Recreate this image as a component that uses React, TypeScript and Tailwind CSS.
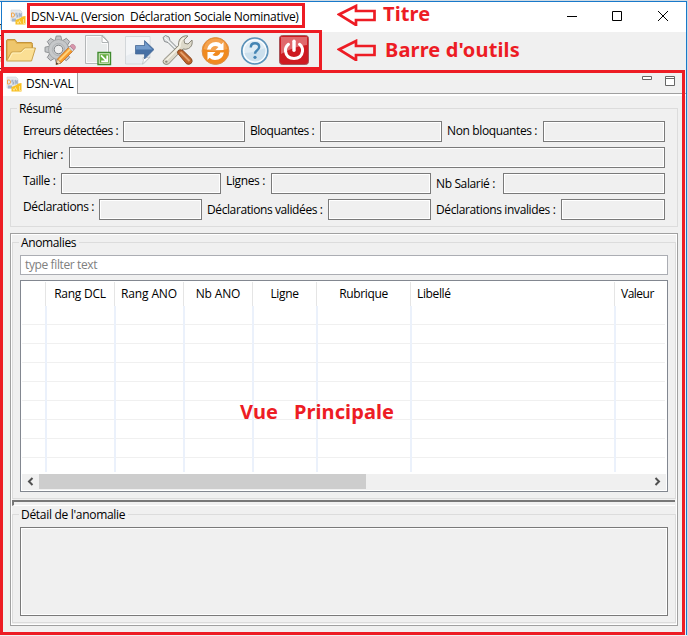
import type { ReactNode } from "react";

function AppLogo() {
  return (
    <svg width="16" height="16" viewBox="0 0 16 16" className="shrink-0">
      <path d="M1 1h9l2 2v9H1z" fill="#e4e7ec" stroke="#ced3da" strokeWidth=".6" />
      <path d="M1.500 4h1.500q1.500 0 1.500 2T3 8H1.500z" fill="none" stroke="#f2a64a" strokeWidth="1" />
      <path d="M7.500 4.200H6V6h1.500v2H6M9.200 8.500V4l2 4V4" fill="none" stroke="#9fb0c6" strokeWidth="1.100" />
      <path d="M2 9.500h4v3H2z" fill="#a3b6cc" />
      <path d="M5.500 15.500V11l4-1.500 3-2 3-.5v8.500z" fill="#f8c023" />
      <path d="M7 12.500l1 2 1.500-3 1.500 3M13.500 10v4.500H15" fill="none" stroke="#fde9a4" strokeWidth=".8" />
    </svg>
  );
}

function Icon({ children }: { children: ReactNode }) {
  return (
    <svg width="32" height="32" viewBox="0 0 32 32" className="shrink-0">
      {children}
    </svg>
  );
}

function ToolIcons() {
  return (
    <>
      <Icon>
        <path d="M1.500 26V7q0-1.500 1.500-1.500h7l2 3h14q1.500 0 1.500 2v5" fill="#e2b24f" stroke="#c2943e" />
        <path d="M3 25V8q0-1 1-1h5.500l2 3h13.500q1 0 1 1.500v4L6 19z" fill="#eec66c" />
        <path d="M1.500 27l5-9h9l4-4h11l-4 13z" fill="#fbdf94" stroke="#c9a04b" strokeLinejoin="round" />
        <path d="M4 25.500l3.500-6.500H16l4-4h9" fill="none" stroke="#fff1bd" />
      </Icon>
      <Icon>
        {[0, 45, 90, 135, 180, 225, 270, 315].map((a) => (
          <path key={a} d="M11 7l1.200-5h4.600L18 7z" transform={`rotate(${a} 14.5 15.5)`} fill="#c3c5c7" stroke="#898c8f" strokeWidth=".9" strokeLinejoin="round" />
        ))}
        <circle cx="14.500" cy="15.500" r="10" fill="#c6c8ca" stroke="#909396" strokeWidth=".6" />
        <circle cx="14.500" cy="15.500" r="8.800" fill="#c6c8ca" />
        <circle cx="14.500" cy="15.500" r="6.200" fill="none" stroke="#b1b4b6" />
        <circle cx="14.500" cy="15.500" r="4.300" fill="#efefef" stroke="#7f8285" />
        <path d="M12 30.500l1.500-5.500L25.500 12.500l4 4L17 29z" fill="#f79a2c" stroke="#b9691e" strokeWidth=".7" />
        <path d="M14.500 25.500l12-12 1.400 1.400-12 12z" fill="#ffd279" />
        <path d="M12 30.500l1.500-5.500 3.500 4z" fill="#f4dcb5" stroke="#9b6f46" strokeWidth=".5" />
        <path d="M24.500 13.500l1.500-1.500 4 4-1.500 1.500z" fill="#d5d5d8" stroke="#96969a" strokeWidth=".4" />
        <path d="M26 12l1.500-1.500q1.500-.7 3 .7t.8 3L30 16z" fill="#d995ab" stroke="#a76a80" strokeWidth=".5" />
        <path d="M12 30.500l.6-2.200 1.500 1.600z" fill="#222" />
      </Icon>
      <Icon>
        <path d="M2.500 1.500H20l5.500 6.500v21.500h-23z" fill="#eef0f0" stroke="#b4b7b8" strokeLinejoin="round" />
        <path d="M3.500 2.500h15v7h6v19h-21z" fill="#e9ebeb" stroke="#fbfbfb" />
        <path d="M19 2v6.500h6.500z" fill="#fff" stroke="#b0b4b5" strokeLinejoin="round" />
        <path d="M15 18.500h12.500v12H15z" fill="#dff0cf" stroke="#3f8a2e" strokeWidth="1.400" />
        <path d="M16.700 20.200h9.100v8.600h-9.100z" fill="#62ac3e" />
        <path d="M18 21.300l5 5M24.200 21.500v5.800h-6" fill="none" stroke="#fff" strokeWidth="1.700" />
      </Icon>
      <Icon>
        <path d="M3.500 2.500h24.500v21L21.500 30H3.500z" fill="#e9edf1" stroke="#d3d7da" />
        <path d="M4 3h23.500v8L4 22z" fill="#f3f5f7" />
        <path d="M20.500 30q1.500-4 .5-6.500 3 .7 7-.5z" fill="#fff" stroke="#b9bdbf" strokeWidth=".8" />
        <path d="M13.500 11.500h9v-5l9.500 9-9.500 9.500v-5h-9z" fill="#456fa4" stroke="#426692" strokeWidth=".7" />
        <path d="M14 12h9V8l7.500 7.500H14z" fill="#739bcb" />
      </Icon>
      <Icon>
        <path d="M2 3.500L4.500 1.500 8 3l1 3.500L20 17.500l-2 2L7 8.500 3.500 7.500z" fill="#dfe2e3" stroke="#7c8082" strokeWidth=".9" />
        <path d="M4 4l14.500 14" stroke="#fff" strokeWidth=".8" />
        <path d="M2.500 26L17.500 11.500Q17 5 22 2.500q2.500-1.200 5-.5L23 6l.7 3.300 3.300.7 4-4q1.200 6-3.500 8.500-2.500 1.300-5.500.5L7.500 30q-2.700 1-4.700-.5-1.300-1.700-.3-3.500z" fill="#ddd9ca" stroke="#817e71" strokeWidth=".9" />
        <path d="M4.500 27l14.500-14.500Q18.500 7 23 4" fill="none" stroke="#f5f2e6" strokeWidth="1.500" />
        <circle cx="5.300" cy="27.600" r="1.200" fill="#8c897c" />
        <path d="M16.500 19q-.3-2.500 2.500-3.300l3 .8 8.500 8.300q1.500 2.600-.3 4.500-2 1.800-4.700.5z" fill="#bd642c" stroke="#814018" strokeWidth=".9" />
        <path d="M19.500 18l9 9" stroke="#e6a16c" strokeWidth="1.800" />
      </Icon>
      <Icon>
        <circle cx="15.500" cy="17" r="13.400" fill="#f08a1f" stroke="#dc8f48" />
        <path d="M3.500 15q2-10.500 12-10.500t12 10.500q-12 4-24 0z" fill="#f5ad62" opacity=".7" />
        <path d="M7 15.500q1.500-7.500 9-7.500 3.300 0 5.500 2.300L23.500 8v8h-8l3-3q-3.700-2.300-6.500.3-1 1-1.300 2.200z" fill="#fff" />
        <path d="M24 18.500q-1.500 7.500-9 7.500-3.300 0-5.500-2.300L7.500 26v-8h8l-3 3q3.700 2.300 6.500-.3 1-1 1.300-2.200z" fill="#fff" />
      </Icon>
      <Icon>
        <circle cx="15.800" cy="17" r="13" fill="#cfe2ef" stroke="#5c92b9" strokeWidth="1.700" />
        <circle cx="15.800" cy="17" r="11.200" fill="#e0ecf4" stroke="#fafdff" strokeWidth="1.300" />
        <path d="M5.500 19q10-.5 20.800-5 1 8-4 11.500-5.500 3.500-11.500.5-4-2.300-5.300-7z" fill="#cce0ed" />
        <path d="M11.800 13.500q0-4.200 4.200-4.200t4.200 3.800q0 2-2.500 3.700-1.700 1.200-1.700 3" fill="none" stroke="#4585b3" strokeWidth="2.400" />
        <circle cx="16" cy="23.300" r="1.600" fill="#4585b3" />
      </Icon>
      <Icon>
        <rect x="1.500" y="1.500" width="29" height="29" rx="3" fill="#ce1a21" stroke="#a9555a" />
        <path d="M3 3h26v8Q17 12 3 20z" fill="#e0686c" />
        <path d="M10.500 10.300Q7 13 7.500 17.300q1 7.200 8.500 7.200t8.500-7.200q.5-4.300-3-7" fill="none" stroke="#fff" strokeWidth="3" strokeLinecap="round" />
        <path d="M16 7.300v9" stroke="#fff" strokeWidth="3.400" strokeLinecap="round" />
      </Icon>
    </>
  );
}

function Field({ w }: { w: string }) {
  return <div className={`h-[21px] shrink-0 border border-[#7a7a7a] bg-[#f0f0f0] shadow-[inset_0_0_0_1px_#fff] ${w}`} />;
}

function Label({ w, pad, children }: { w: string; pad: string; children: ReactNode }) {
  return <div className={`h-[21px] shrink-0 leading-4 whitespace-nowrap ${w} ${pad}`}>{children}</div>;
}

function Legend({ children, className }: { children: ReactNode; className: string }) {
  return <div className={`absolute bg-[#f0f0f0] leading-4 whitespace-nowrap ${className}`}>{children}</div>;
}

const columns = [
  { name: "", w: "w-[23px]", align: "" },
  { name: "Rang DCL", w: "w-[69px]", align: "text-center tracking-[-0.25px]" },
  { name: "Rang ANO", w: "w-[69px]", align: "text-center tracking-[-0.15px]" },
  { name: "Nb ANO", w: "w-[69px]", align: "text-center tracking-[-0.15px]" },
  { name: "Ligne", w: "w-[64px]", align: "text-center" },
  { name: "Rubrique", w: "w-[94px]", align: "text-center" },
  { name: "Libellé", w: "w-[204px]", align: "pl-[6px]" },
  { name: "Valeur", w: "w-[51px]", align: "pl-[6px] tracking-[-0.5px]" },
];

function Table() {
  return (
    <div className="mt-[5px] flex h-[212px] flex-col border border-[#828790] bg-white p-px">
      <div className="flex h-6">
        {columns.map((c, i) => (
          <div key={i} className={`shrink-0 pt-1 leading-4 whitespace-nowrap ${c.w} ${c.align} ${i ? "border-l border-[#e5e5e5]" : ""}`}>
            {c.name}
          </div>
        ))}
      </div>
      <div className="h-[168px]">
        <div className="flex h-[166px]">
          {columns.map((c, i) => (
            <div key={i} className={`shrink-0 ${c.w} ${i ? "border-l-2 border-[#ebf1fb]" : ""}`}>
              {[0, 1, 2, 3, 4, 5, 6, 7].map((r) => (
                <div key={r} className="h-[19px] border-b border-[#f0f0f0]" />
              ))}
            </div>
          ))}
        </div>
      </div>
      <div className="flex h-4 items-center bg-[#f0f0f0]">
        <svg width="17" height="16" className="shrink-0"><path d="M10.500 4L7 7.500l3.500 3.500" fill="none" stroke="#505050" strokeWidth="2" /></svg>
        <div className="mb-px h-[15px] w-[327px] bg-[#cdcdcd]" />
        <div className="flex-1" />
        <svg width="17" height="16" className="shrink-0"><path d="M6.500 4L10 7.500 6.500 11" fill="none" stroke="#505050" strokeWidth="2" /></svg>
      </div>
    </div>
  );
}

function RedArrow() {
  return (
    <svg width="40" height="22" className="shrink-0">
      <path d="M2 11.500L19 3v5h18.500v9H19v5z" transform="translate(0 -1)" fill="none" stroke="#ed1c24" strokeWidth="2.700" />
    </svg>
  );
}

export default function App() {
  return (
    <div className="relative flex h-[636px] w-[688px] flex-col overflow-hidden border-t border-r border-[#d0dbe4] bg-[#f0f0f0] font-['Open_Sans','Noto_Sans',sans-serif] text-[12px] tracking-[-0.37px] text-black">
      <header className="flex h-[31px] shrink-0 items-center border-t border-r border-[#1979ca] bg-white pl-[10px]">
        <AppLogo />
        <div className="ml-[5px] w-[520px] leading-4 whitespace-pre tracking-[-0.29px]">DSN-VAL (Version  Déclaration Sociale Nominative)</div>
        <svg width="130" height="30" className="shrink-0" fill="none" stroke="#000">
          <path d="M16 14.500h10M61.500 9.500h9v9h-9z" />
          <path d="M107 9l10 10M117 9l-10 10" />
        </svg>
      </header>

      <div className="flex h-[38px] shrink-0 items-start gap-[7px] border-r border-[#1979ca] pt-[2px] pl-[5px]">
        <ToolIcons />
      </div>

      <main className="flex h-[565px] shrink-0 flex-col border-r border-[#1979ca] pt-[3px]">
        <div className="flex h-[21px] shrink-0 border-b border-[#a0a0a0]">
          <div className="-mb-px flex w-[78px] items-center border-r border-[#a0a0a0] bg-white pl-[6px]">
            <AppLogo />
            <span className="ml-1 leading-4 tracking-[-0.25px]">DSN-VAL</span>
          </div>
          <div className="flex-1" />
          <svg width="46" height="20" className="shrink-0" fill="#fff" stroke="#666">
            <path d="M2.500 3.500h9v3h-9zM25.500 3.500h9v9h-9zM25.500 5.500h9" />
          </svg>
        </div>
        <div className="h-[2px] shrink-0 bg-white" />

        <section className="relative mt-3 ml-[10px] flex h-[119px] w-[668px] shrink-0 flex-col gap-[5px] border border-[#dcdcdc] pt-3 pl-3">
          <Legend className="top-[-8px] left-[6px] w-[47px] pl-[2px]">Résumé</Legend>
          <div className="flex">
            <Label w="w-[100px]" pad="pt-[2px] tracking-[-0.52px]">Erreurs détectées :</Label>
            <Field w="w-[122px]" />
            <Label w="w-[75px]" pad="pt-[2px] pl-[5px] tracking-[-0.46px]">Bloquantes :</Label>
            <Field w="w-[122px]" />
            <Label w="w-[101px]" pad="pt-[2px] pl-[5px]">Non bloquantes :</Label>
            <Field w="w-[122px]" />
          </div>
          <div className="flex">
            <Label w="w-[46px]" pad="pt-0">Fichier :</Label>
            <Field w="w-[596px]" />
          </div>
          <div className="flex">
            <Label w="w-[38px]" pad="pt-0">Taille :</Label>
            <Field w="w-[160px]" />
            <Label w="w-[50px]" pad="pl-[5px]">Lignes :</Label>
            <Field w="w-[160px]" />
            <Label w="w-[72px]" pad="pt-[3px] pl-[5px]">Nb Salarié :</Label>
            <Field w="w-[162px]" />
          </div>
          <div className="flex">
            <Label w="w-[76px]" pad="pt-0">Déclarations :</Label>
            <Field w="w-[103px]" />
            <Label w="w-[126px]" pad="pt-[3px] pl-[5px] tracking-[-0.4px]">Déclarations validées :</Label>
            <Field w="w-[103px]" />
            <Label w="w-[130px]" pad="pt-[3px] pl-[5px]">Déclarations invalides :</Label>
            <Field w="w-[104px]" />
          </div>
        </section>

        <div className="mt-[6px] ml-[10px] flex h-[393px] w-[668px] shrink-0 flex-col border border-[#a0a0a0] pl-px shadow-[inset_0_0_0_1px_#fff]">
          <section className="relative mt-2 flex h-[257px] w-[664px] shrink-0 flex-col border border-[#dcdcdc] px-[7px] pt-3">
            <Legend className="top-[-8px] left-[6px] w-[60px] pl-[2px]">Anomalies</Legend>
            <div className="h-5 shrink-0 border border-[#abadb3] bg-white pl-1 leading-[18px] tracking-[-0.38px] text-[#808080]">type filter text</div>
            <Table />
          </section>
          <div className="mt-px h-[6px] w-[663px] shrink-0 border-t-2 border-b border-l-2 border-t-[#777] border-b-[#fff] border-l-[#777]" />
          <section className="relative mt-2 h-[109px] w-[664px] shrink-0 border border-[#dcdcdc] px-[7px] pt-3">
            <Legend className="top-[-8px] left-[6px] w-[109px] pl-[2px] tracking-[-0.3px]">Détail de l'anomalie</Legend>
            <div className="h-[89px] border border-[#7a7a7a] shadow-[inset_0_0_0_1px_#fff]" />
          </section>
        </div>
      </main>

      <div className="absolute top-[2px] left-[27px] h-[25px] w-[278px] border-3 border-[#ed1c24]" />
      <div className="absolute top-[29px] left-[1px] h-[40px] w-[321px] border-3 border-[#ed1c24]" />
      <div className="absolute top-[69px] left-0 h-[565px] w-[685px] border-3 border-[#ed1c24]" />
      <div className="absolute top-[3px] left-[337px] flex items-center gap-[6px] font-['Noto_Sans','Open_Sans',sans-serif] text-[20px] leading-[22px] font-bold tracking-[0.1px] text-[#ed1c24]">
        <RedArrow />
        <span className="relative -top-px">Titre</span>
      </div>
      <div className="absolute top-[38px] left-[337px] flex items-center gap-[8px] font-['Noto_Sans','Open_Sans',sans-serif] text-[20px] leading-[22px] font-bold tracking-[0.15px] text-[#ed1c24]">
        <RedArrow />
        Barre d'outils
      </div>
      <div className="absolute top-[399px] left-[240px] font-['Noto_Sans','Open_Sans',sans-serif] text-[20px] leading-6 font-bold tracking-[0.1px] whitespace-pre text-[#ed1c24]">Vue   Principale</div>

      {/* Edges of the windows behind this one */}
      <div className="absolute top-[17px] left-0 h-[53px] w-px bg-[repeating-linear-gradient(#fff_0_6px,#333_6px_7px,#e8d5bb_7px_11px)]" />
      <div className="absolute top-[1px] left-[1px] h-[28px] w-px bg-[#1979ca]" />
      <div className="absolute top-[166px] left-[687px] h-[9px] w-px bg-[#1b2433]" />
      <div className="absolute top-[211px] left-[687px] h-[9px] w-px bg-[#1b2433]" />
      <div className="absolute top-[559px] left-[687px] h-[8px] w-px bg-[repeating-linear-gradient(#1b2433_0_1px,#d0dbe4_1px_5px)]" />
    </div>
  );
}
